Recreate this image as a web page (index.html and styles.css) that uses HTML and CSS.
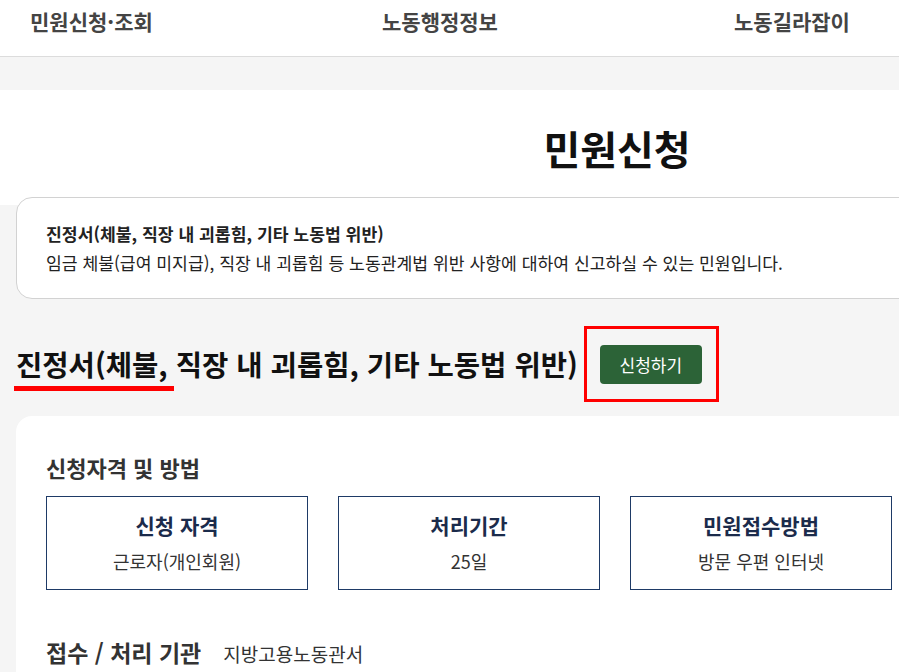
FILE: index.html
```html
<!DOCTYPE html>
<html lang="ko">
<head>
    <meta charset="UTF-8">
    <meta name="viewport" content="width=device-width, initial-scale=1.0">
    <title>민원신청</title>
    <link rel="stylesheet" href="styles.css">
</head>
<body>

<div class="wrap">
    <!-- Top menu -->
    <header class="gnb">
        <a href="#">민원신청·조회</a>
        <a href="#">노동행정정보</a>
        <a href="#">노동길라잡이</a>
    </header>

    <!-- Page title -->
    <section class="hero">
        <h1>민원신청</h1>
    </section>

    <div class="content">
        <div class="intro-card">
            <p class="intro-title">진정서(체불, 직장 내 괴롭힘, 기타 노동법 위반)</p>
            <p class="intro-desc">임금 체불(급여 미지급), 직장 내 괴롭힘 등 노동관계법 위반 사항에 대하여 신고하실 수 있는 민원입니다.</p>
        </div>

        <div class="apply-row">
            <h2 class="apply-title"><span class="mark">진정서(체불,</span> 직장 내 괴롭힘, 기타 노동법 위반)</h2>
            <div class="apply-box">
                <button class="apply-btn">신청하기</button>
            </div>
        </div>

        <!-- Details -->
        <section class="info-card">
            <h3>신청자격 및 방법</h3>
            <div class="info-grid">
                <div class="info-item">
                    <strong>신청 자격</strong>
                    <span>근로자(개인회원)</span>
                </div>
                <div class="info-item">
                    <strong>처리기간</strong>
                    <span>25일</span>
                </div>
                <div class="info-item">
                    <strong>민원접수방법</strong>
                    <span>방문 우편 인터넷</span>
                </div>
            </div>

            <div class="agency">
                <h3>접수 / 처리 기관</h3>
                <span>지방고용노동관서</span>
            </div>
        </section>
    </div>
</div>

</body>
</html>
```

FILE: styles.css
```css
html {
    overflow: hidden;
}

body {
    font-family: "Noto Sans CJK KR", "Noto Sans", sans-serif;
    background-color: #f5f5f5;
    color: #333;
    margin: 0;
    padding: 0;
}

.wrap {
    width: 1234px;
}

.gnb {
    display: grid;
    grid-template-columns: repeat(3, 352px);
    height: 56px;
    padding-left: 30px;
    background-color: #fff;
    border-bottom: 1px solid #dcdcdc;
}

.gnb a {
    padding-top: 8px;
    font-size: 21px;
    line-height: 26px;
    font-weight: 700;
    color: #444;
    text-decoration: none;
}

.hero {
    height: 115px;
    margin-top: 33px;
    background-color: #fff;
}

.hero h1 {
    margin: 0;
    padding-top: 33px;
    font-size: 40px;
    line-height: 50px;
    font-weight: 700;
    color: #111;
    text-align: center;
}

.content {
    padding: 0 16px;
}

.intro-card {
    margin-top: -8px;
    padding: 22px 29px 21px;
    background-color: #fff;
    border: 1px solid #d2d2d2;
    border-radius: 16px;
}

.intro-card p {
    margin: 0;
    font-size: 17.2px;
    line-height: 28px;
    color: #222;
}

.intro-card p + p {
    margin-top: 1px;
}

.intro-title {
    font-weight: 700;
}

.apply-row {
    display: flex;
    align-items: center;
    margin-top: 27px;
}

.apply-title {
    margin: 0;
    font-size: 28.6px;
    line-height: 40px;
    font-weight: 700;
    color: #111;
}

.mark {
    position: relative;
}

.mark::after {
    content: "";
    position: absolute;
    left: -2px;
    right: -6px;
    bottom: -7px;
    height: 5px;
    background-color: #ff0000;
}

.apply-box {
    margin-left: 6px;
    padding: 16px 14px 15px 13px;
    border: 3px solid #ff0000;
}

.apply-btn {
    display: block;
    width: 102px;
    height: 39px;
    font-family: inherit;
    font-size: 17px;
    color: #fff;
    background-color: #2c6337;
    border: none;
    border-radius: 4px;
    cursor: pointer;
}

.info-card {
    margin-top: 14px;
    padding: 36px 30px 40px;
    background-color: #fff;
    border-radius: 16px;
}

.info-card h3 {
    margin: 0;
    font-size: 22px;
    line-height: 30px;
    font-weight: 700;
    color: #333;
}

.info-grid {
    display: grid;
    grid-template-columns: repeat(3, 262px);
    gap: 30px;
    margin-top: 14px;
}

.info-item {
    display: flex;
    flex-direction: column;
    align-items: center;
    padding: 14px 0 15px;
    border: 1px solid #1e3a66;
}

.info-item strong {
    font-size: 21px;
    line-height: 28px;
    font-weight: 700;
    color: #1b2b4b;
}

.info-item span {
    margin-top: 9px;
    font-size: 18px;
    line-height: 26px;
    color: #333;
}

.agency {
    display: flex;
    align-items: baseline;
    gap: 22px;
    margin-top: 47px;
}

.agency h3 {
    font-size: 23px;
}

.agency span {
    font-size: 19px;
    color: #333;
}
```
